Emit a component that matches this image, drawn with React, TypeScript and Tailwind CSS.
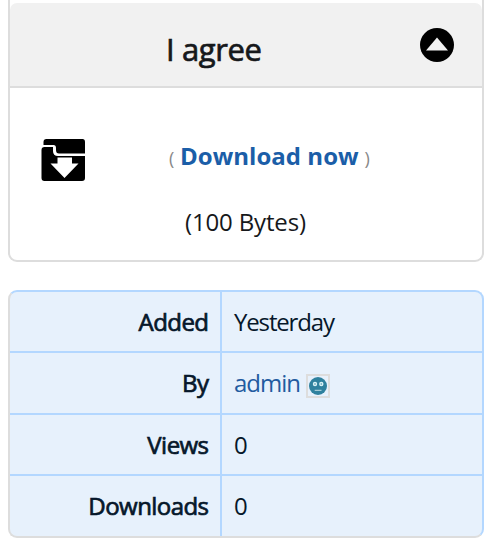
import type { ReactNode } from "react";

function CollapseIcon() {
  return (
    <svg width="34" height="34" viewBox="0 0 34 34" aria-hidden="true">
      <circle cx="17" cy="17" r="17" fill="#000" />
      <path d="M17 9.5 28 22.5H6Z" fill="#f1f1f1" />
    </svg>
  );
}

function DownloadIcon() {
  return (
    <svg width="44" height="42" viewBox="0 0 44 42" aria-hidden="true">
      <path d="M5.5 0H41.5Q44 0 44 3V14.5H18Q15 14.5 15 11V9Q15 6 12.5 6H2.5V3Q2.5 0 5.5 0Z" fill="#000" />
      <path
        d="M3.5 8H12V12Q12 17 17 17H44V39Q44 42 41 42H3.5Q0.5 42 0.5 39V11Q0.5 8 3.5 8Z"
        fill="#000"
      />
      <path d="M16.5 18.5H31V24.5H37.5L23.5 39 9.5 24.5H16.5Z" fill="#fff" />
    </svg>
  );
}

function UserIcon() {
  return (
    <svg width="18" height="18" viewBox="0 0 18 18" aria-hidden="true">
      <circle cx="9" cy="9" r="9" fill="#2f819e" />
      <circle cx="6" cy="7" r="2.2" fill="#d9f1f5" />
      <circle cx="12.3" cy="7" r="2.2" fill="#d9f1f5" />
      <circle cx="6" cy="7" r="0.8" fill="#4f99ae" />
      <circle cx="12.3" cy="7" r="0.8" fill="#4f99ae" />
      <path d="M5.7 13.4H12.5" stroke="#a3cbd5" strokeWidth="1.2" />
    </svg>
  );
}

function Row({ label, children, height }: { label: string; children: ReactNode; height: string }) {
  return (
    <div className={`flex ${height} border-b-2 border-[#b3d7ff] last:border-b-0`}>
      <div className="w-[212px] shrink-0 border-r-2 border-[#b3d7ff] pr-[11.5px] text-right leading-[59px] tracking-[-0.55px] [-webkit-text-stroke:0.7px_#06172a]">
        {label}
      </div>
      <div className="flex items-start pl-3 leading-[59px]">{children}</div>
    </div>
  );
}

export default function App() {
  return (
    <main className="h-[548px] overflow-hidden bg-white px-2 pr-[10px] font-['Open_Sans','Noto_Sans',sans-serif] text-2xl tracking-[-0.3px] text-[#06172a]">
      <section className="h-[262px] rounded-b-[9px] border-2 border-t-0 border-[#ddd] pt-[3px] text-[#16181b]">
        <header className="flex h-[85px] justify-between rounded-t-[7px] border-b-2 border-[#ddd] bg-[#f1f1f1] pl-[156px] pr-7">
          <h1 className="pt-[25px] text-[31px] leading-[42px] tracking-[-0.4px] [-webkit-text-stroke:0.7px_#16181b]">
            I agree
          </h1>
          <div className="pt-[25px]">
            <CollapseIcon />
          </div>
        </header>
        <div className="flex pl-[31px] pt-[51px]">
          <DownloadIcon />
          <div className="pl-[84px]">
            <div className="flex items-baseline whitespace-nowrap leading-[34px]">
              <span className="text-lg text-[#888]">(</span>
              <a className="px-[6px] font-bold tracking-[0.03px] text-[#1b5ea8]">Download now</a>
              <span className="text-lg text-[#888]">)</span>
            </div>
            <div className="pl-[16px] pt-[32px] leading-[34px] tracking-[-0.15px]">(100 Bytes)</div>
          </div>
        </div>
      </section>
      <section className="mt-7 h-[248px] overflow-hidden rounded-[9px] border-2 border-x-[#b3d7ff] border-b-[#ddd] border-l-[#ddd] border-t-[#b3d7ff] bg-[#e7f1fc]">
        <Row label="Added" height="h-[61px]">
          <span className="tracking-[-1.15px]">Yesterday</span>
        </Row>
        <Row label="By" height="h-[62px]">
          <a className="tracking-[-1px] text-[#225ba0]">admin</a>
          <span className="ml-[6px] mt-[21px] flex size-6 items-center justify-center border-2 border-[#ddd]">
            <UserIcon />
          </span>
        </Row>
        <Row label="Views" height="h-[61px]">0</Row>
        <Row label="Downloads" height="h-[60px]">0</Row>
      </section>
    </main>
  );
}
